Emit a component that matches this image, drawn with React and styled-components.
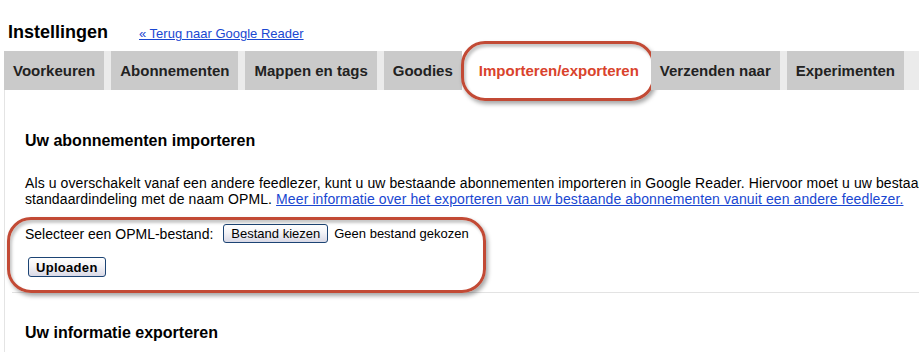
import styled, { createGlobalStyle } from 'styled-components';

const GlobalStyle = createGlobalStyle`
  html, body {
    margin: 0;
    padding: 0;
    background: #fff;
    overflow: hidden;
  }
  body {
    font-family: "Liberation Sans", Arial, sans-serif;
    color: #000;
  }
`;

const Page = styled.div`
  width: 919px;
  height: 352px;
  padding-left: 4px;
  box-sizing: border-box;
  overflow: hidden;
`;

const Header = styled.div`
  display: flex;
  align-items: baseline;
  gap: 31px;
  padding: 21px 0 0 4px;
  margin-bottom: 8px;
`;

const Title = styled.h1`
  margin: 0;
  font-size: 18px;
  line-height: 22px;
  font-weight: bold;
`;

const Link = styled.a`
  color: #1a47d1;
  text-decoration: underline;
  font-size: ${(p) => (p.size ? `${p.size}px` : 'inherit')};
  cursor: pointer;
`;

const TabStrip = styled.ul`
  display: flex;
  gap: 7px;
  height: 39px;
  margin: 0;
  padding: 0;
  list-style: none;
  background: #ebebeb;
`;

const Tab = styled.li`
  position: relative;
  display: flex;
  align-items: center;
  padding: ${(p) => (p.selected ? '0 12px 0 17px' : '0 9px')};
  margin: ${(p) => (p.selected ? '0 -7px' : '0')};
  background: ${(p) => (p.selected ? '#fff' : '#cacaca')};
  color: ${(p) => (p.selected ? '#d9432c' : '#222')};
  font-size: 15px;
  font-weight: bold;
  white-space: nowrap;
`;

const Ring = styled.span`
  position: absolute;
  border: 3px solid #c24a35;
  border-radius: ${(p) => p.radius || 22}px;
  box-shadow: 2px 3px 4px rgba(0, 0, 0, 0.35),
    inset 2px 3px 3px rgba(0, 0, 0, 0.22);
  pointer-events: none;
`;

const TabRing = styled(Ring)`
  left: -1px;
  right: -4px;
  top: -10px;
  bottom: -11px;
`;

const Panel = styled.div`
  border-left: 1px solid #e4e4e4;
  padding: 41px 0 0 20px;
  height: 300px;
`;

const SectionTitle = styled.h2`
  margin: 0;
  font-size: 16px;
  line-height: 20px;
  font-weight: bold;
`;

const Paragraph = styled.p`
  margin: 24px 0 0;
  font-size: 14px;
  line-height: 16px;
  letter-spacing: 0.1px;
  white-space: nowrap;
`;

const UploadBox = styled.div`
  position: relative;
  margin-top: 17px;
  display: flex;
  flex-direction: column;
  align-items: flex-start;
  gap: 14px;
`;

const UploadRing = styled(Ring)`
  left: -18px;
  top: -7px;
  bottom: -16px;
  width: 473px;
`;

const FileRow = styled.div`
  display: flex;
  align-items: center;
  font-size: 14px;
  line-height: 16px;
`;

const Button = styled.button`
  font-family: "Liberation Sans", Arial, sans-serif;
  font-size: 13px;
  font-weight: ${(p) => (p.bold ? 'bold' : 'normal')};
  letter-spacing: ${(p) => (p.bold ? '0.3px' : '0')};
  height: ${(p) => (p.bold ? 20 : 19)}px;
  padding: 0 7px;
  margin-left: ${(p) => p.offset || 0}px;
  border: 1px solid #1c4474;
  border-radius: 3px;
  background: linear-gradient(#ffffff, #f3f3f7 45%, #d9d9e6);
  color: #000;
  line-height: 17px;
`;

const FileName = styled.span`
  margin-left: 6px;
  font-size: 13px;
`;

const Divider = styled.hr`
  margin: 15px 0 0 -13px;
  border: 0;
  border-top: 1px solid #e3e3e3;
  height: 0;
`;

const ExportTitle = styled(SectionTitle)`
  margin-top: 30px;
`;

const tabs = [
  'Voorkeuren',
  'Abonnementen',
  'Mappen en tags',
  'Goodies',
  'Importeren/exporteren',
  'Verzenden naar',
  'Experimenten',
];

export default function App() {
  return (
    <>
      <GlobalStyle />
      <Page>
        <Header>
          <Title>Instellingen</Title>
          <Link size={13}>« Terug naar Google Reader</Link>
        </Header>
        <TabStrip>
          {tabs.map((t) => (
            <Tab key={t} selected={t === 'Importeren/exporteren'}>
              {t}
              {t === 'Importeren/exporteren' && <TabRing radius={24} />}
            </Tab>
          ))}
        </TabStrip>
        <Panel>
          <SectionTitle>Uw abonnementen importeren</SectionTitle>
          <Paragraph>
            Als u overschakelt vanaf een andere feedlezer, kunt u uw bestaande abonnementen
            importeren in Google Reader. Hiervoor moet u uw bestaande abonnementen exporteren
            naar een bestand in de
            <br />
            standaardindeling met de naam OPML.{' '}
            <Link>
              Meer informatie over het exporteren van uw bestaande abonnementen vanuit een
              andere feedlezer.
            </Link>
          </Paragraph>
          <UploadBox>
            <FileRow>
              Selecteer een OPML-bestand:
              <Button offset={10}>Bestand kiezen</Button>
              <FileName>Geen bestand gekozen</FileName>
            </FileRow>
            <Button bold offset={3}>Uploaden</Button>
            <UploadRing radius={24} />
          </UploadBox>
          <Divider />
          <ExportTitle>Uw informatie exporteren</ExportTitle>
        </Panel>
      </Page>
    </>
  );
}
